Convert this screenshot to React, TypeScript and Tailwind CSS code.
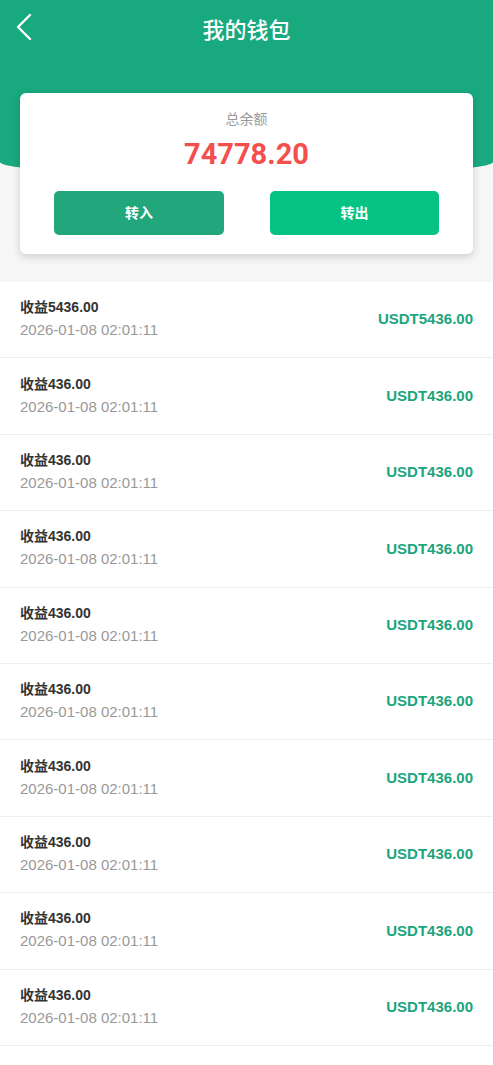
import {FunctionComponent} from 'react'

interface IRecord {
    title: string
    time: string
    amount: string
}

const records: IRecord[] = [
    {title: "收益5436.00", time: "2026-01-08 02:01:11", amount: "USDT5436.00"},
    ...Array.from({length: 9}, () => ({title: "收益436.00", time: "2026-01-08 02:01:11", amount: "USDT436.00"})),
]

const cjk = "font-['Liberation_Sans','Noto_Sans_CJK_SC',sans-serif]"

const RecordRow: FunctionComponent<{record: IRecord}> = ({record}) => {
    return (
        <div className="h-[76.4px] flex items-center justify-between px-[20px] border-b border-[#eeeeee]">
            <div className="flex flex-col -mt-[2px]">
                <div className="text-[14px] leading-[22px] font-bold text-[#333333]">{record.title}</div>
                <div className="text-[15px] leading-[22px] text-[#999999] mt-[1px]">{record.time}</div>
            </div>
            <div className="text-[15px] font-bold text-[#1ba57c]">{record.amount}</div>
        </div>
    )
}

const App: FunctionComponent = () => {
    return (
        <div className={"w-[493px] min-h-[1065px] bg-white " + cjk}>
            <div className="bg-[#f6f6f6] pb-[28px]">
                <div className="h-[176px] bg-[#19a97f] rounded-b-[50%_14px]">
                    <div className="relative h-[60px] flex items-center justify-center">
                        <svg className="absolute left-[14px] top-[12px]" width="20" height="30" viewBox="0 0 20 30">
                            <path d="M16 3 L4 15 L16 27" fill="none" stroke="white" strokeWidth="2.4" strokeLinecap="round" strokeLinejoin="round"/>
                        </svg>
                        <div className="text-[22px] font-medium text-white mt-[1px]">我的钱包</div>
                    </div>
                </div>
                <div className="mx-[20px] -mt-[83px] h-[161px] bg-white rounded-[6px] shadow-[0_3px_8px_rgba(0,0,0,0.16)] flex flex-col items-center pt-[10px] px-[34px] relative">
                    <div className="text-[14px] leading-[20px] text-[#999999] mt-[6px]">总余额</div>
                    <div className="text-[29px] leading-[36px] font-bold text-[#f44f4c] font-['Roboto',sans-serif] mt-[7px]">74778.20</div>
                    <div className="w-full flex justify-between mt-[19px]">
                        <button className="w-[170px] h-[44px] rounded-[5px] bg-[#22a77d] text-white text-[14px] font-semibold">转入</button>
                        <button className="w-[169px] h-[44px] rounded-[5px] bg-[#06c383] text-white text-[14px] font-semibold">转出</button>
                    </div>
                </div>
            </div>
            <div>
                {records.map((record, index) => <RecordRow key={index} record={record}/>)}
            </div>
        </div>
    )
}

export default App
